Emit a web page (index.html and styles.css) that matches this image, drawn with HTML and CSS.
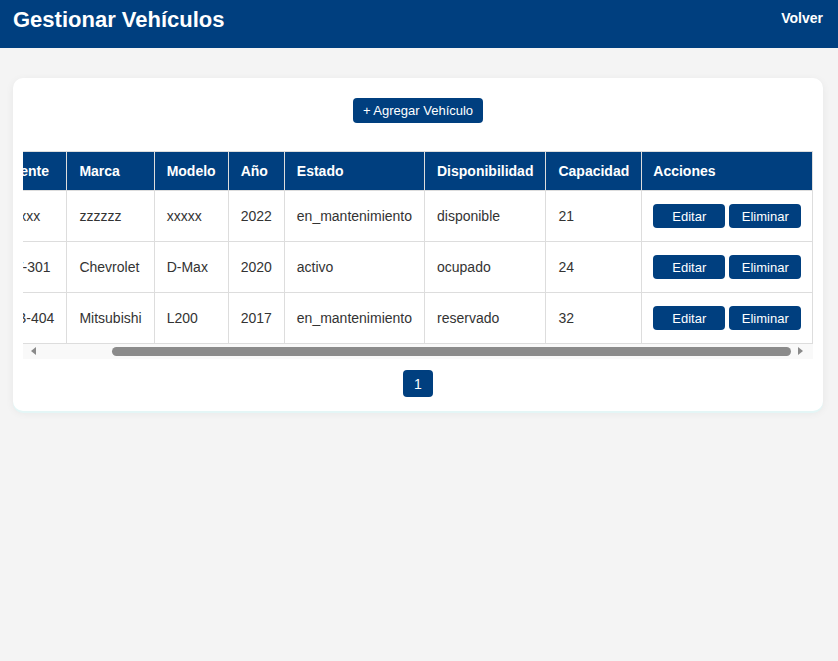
FILE: index.html
```html
<!DOCTYPE html>
<html lang="es">
<head>
<meta charset="utf-8">
<title>Gestionar Vehículos</title>
<link rel="stylesheet" href="styles.css">
</head>
<body>
<header class="topbar">
  <h1 class="title">Gestionar Vehículos</h1>
  <a class="back" href="#">Volver</a>
</header>
<main class="card">
  <div class="actions-top">
    <button class="btn btn-add">+ Agregar Vehículo</button>
  </div>
  <div class="table-wrap" id="wrap">
    <table class="grid">
      <thead>
        <tr>
          <th>ID</th>
          <th class="col-plate">Patente</th>
          <th>Marca</th>
          <th>Modelo</th>
          <th>Año</th>
          <th>Estado</th>
          <th>Disponibilidad</th>
          <th>Capacidad</th>
          <th class="acts">Acciones</th>
        </tr>
      </thead>
      <tbody>
        <tr>
          <td>101</td>
          <td>xxxxxx</td>
          <td>zzzzzz</td>
          <td>xxxxx</td>
          <td>2022</td>
          <td>en_mantenimiento</td>
          <td>disponible</td>
          <td>21</td>
          <td class="acts"><button class="btn btn-sm">Editar</button><button class="btn btn-sm">Eliminar</button></td>
        </tr>
        <tr>
          <td>102</td>
          <td>FJV-301</td>
          <td>Chevrolet</td>
          <td>D-Max</td>
          <td>2020</td>
          <td>activo</td>
          <td>ocupado</td>
          <td>24</td>
          <td class="acts"><button class="btn btn-sm">Editar</button><button class="btn btn-sm">Eliminar</button></td>
        </tr>
        <tr>
          <td>103</td>
          <td>ABB-404</td>
          <td>Mitsubishi</td>
          <td>L200</td>
          <td>2017</td>
          <td>en_mantenimiento</td>
          <td>reservado</td>
          <td>32</td>
          <td class="acts"><button class="btn btn-sm">Editar</button><button class="btn btn-sm">Eliminar</button></td>
        </tr>
      </tbody>
    </table>
  </div>
  <div class="hscroll" aria-hidden="true">
    <span class="sb-btn sb-left"></span>
    <div class="sb-track" id="track"><div class="sb-thumb" id="thumb"></div></div>
    <span class="sb-btn sb-right"></span>
  </div>
  <nav class="pager">
    <button class="btn page">1</button>
  </nav>
</main>
<script src="script.js"></script>
</body>
</html>
```

FILE: styles.css
```css
* { box-sizing: border-box; }
html, body { margin: 0; padding: 0; }
body {
  background: #f4f4f4;
  font-family: "Liberation Sans", Arial, sans-serif;
  color: #333;
  width: 838px;
  height: 661px;
}
.topbar {
  background: #003f7f;
  height: 48px;
  display: flex;
  justify-content: space-between;
  align-items: flex-start;
  padding: 7px 15px 0 13px;
}
.title {
  margin: 0;
  color: #fff;
  font-size: 22px;
  line-height: 26px;
  font-weight: bold;
}
.back {
  color: #fff;
  font-size: 14px;
  font-weight: bold;
  text-decoration: none;
  line-height: 20px;
  margin-top: 1px;
}
.card {
  display: block;
  margin: 30px 15px 0 13px;
  background: #fff;
  border-radius: 10px;
  padding: 20px 10px 14px;
  box-shadow: 0 2px 0 #e4f6f6, 0 2px 8px rgba(0, 0, 0, 0.06);
}
.actions-top {
  display: flex;
  justify-content: center;
  margin-bottom: 28px;
}
.btn {
  font-family: "Liberation Sans", Arial, sans-serif;
  background: #003f7f;
  color: #fff;
  border: none;
  border-radius: 4px;
  cursor: pointer;
}
.btn-add {
  height: 25px;
  padding: 0 10px;
  font-size: 13px;
}
.table-wrap {
  overflow-x: auto;
  scrollbar-width: none;
  width: 790px;
}
.hscroll {
  display: flex;
  width: 790px;
  height: 15px;
  background: #f9f9f9;
}
.sb-btn {
  flex: none;
  display: flex;
  align-items: flex-start;
  padding-top: 3px;
}
.sb-left {
  width: 15px;
  padding-left: 8px;
}
.sb-right {
  width: 22px;
  padding-left: 7px;
}
.sb-left::before,
.sb-right::before {
  content: "";
  width: 0;
  height: 0;
  border-top: 4px solid transparent;
  border-bottom: 4px solid transparent;
}
.sb-left::before { border-right: 5px solid #8a8a8a; }
.sb-right::before { border-left: 5px solid #8a8a8a; }
.sb-track {
  flex: 1;
  padding-top: 3px;
}
.sb-thumb {
  height: 9px;
  width: 680px;
  margin-left: 73px;
  background: #8b8b8b;
  border-radius: 4.5px;
}
.grid {
  border-collapse: collapse;
  white-space: nowrap;
}
.grid th, .grid td {
  border: 1px solid #ddd;
  text-align: left;
  font-size: 14px;
}
.grid th {
  background: #003f7f;
  color: #fff;
  font-weight: bold;
  padding: 11px 12px 11px;
  line-height: 16px;
}
.grid td {
  padding: 13px 12px 13px;
  line-height: 24px;
  color: #333;
}
.grid th.col-plate {
  box-sizing: content-box;
  width: 58px;
}
.grid .acts {
  padding-left: 11px;
  padding-right: 11px;
}
.btn-sm {
  width: 72px;
  height: 24px;
  font-size: 13px;
  vertical-align: top;
  padding: 0;
}
.btn-sm + .btn-sm { margin-left: 4px; }
.pager {
  display: flex;
  justify-content: center;
  margin-top: 11px;
}
.page {
  width: 30px;
  height: 27px;
  font-size: 14px;
  padding: 0;
}
```

FILE: script.js
```js
var wrap = document.getElementById('wrap');
var track = document.getElementById('track');
var thumb = document.getElementById('thumb');
wrap.scrollLeft = wrap.scrollWidth;
var ratio = track.clientWidth / wrap.scrollWidth;
thumb.style.width = (wrap.clientWidth * ratio) + 'px';
thumb.style.marginLeft = (wrap.scrollLeft * ratio) + 'px';
```
